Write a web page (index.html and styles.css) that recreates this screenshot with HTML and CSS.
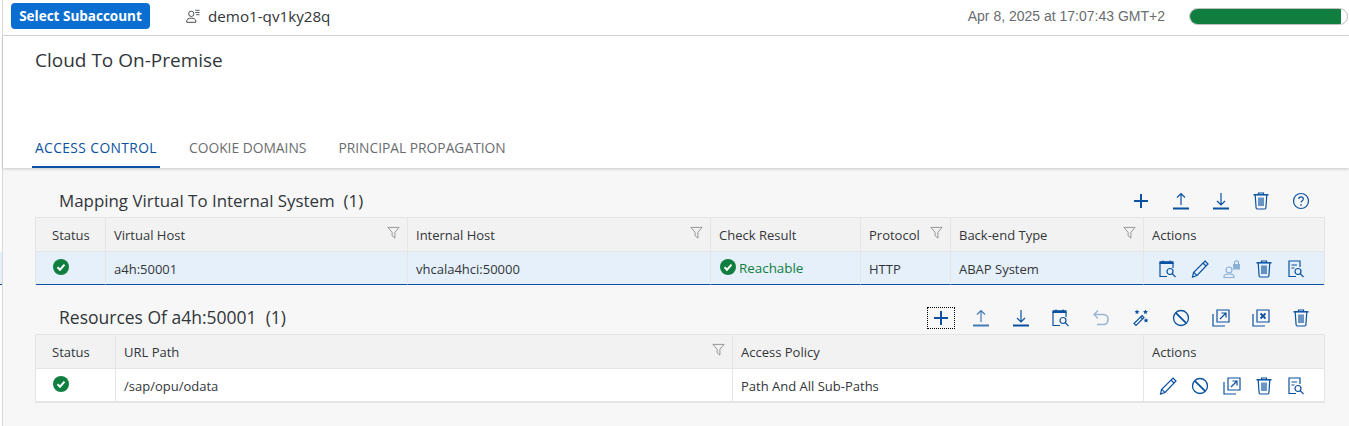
FILE: index.html
```html
<!DOCTYPE html>
<html lang="en">
<head>
    <meta charset="UTF-8">
    <meta name="viewport" content="width=device-width, initial-scale=1.0">
    <title>Cloud To On-Premise</title>
    <link rel="stylesheet" href="styles.css">
</head>
<body>
    <svg class="sprites" aria-hidden="true">
        <symbol id="i-plus" viewBox="0 0 18 18"><path d="M9 2v14M2 9h14" stroke-width="2"/></symbol>
        <symbol id="i-upload" viewBox="0 0 18 18"><path d="M9 13V2M5 5.500 9 1.500l4 4"/><path d="M1 16.500h16" stroke-width="2"/></symbol>
        <symbol id="i-download" viewBox="0 0 18 18"><path d="M9 1v11.500M5 9l4 4 4-4"/><path d="M1 16.500h16" stroke-width="2"/></symbol>
        <symbol id="i-trash" viewBox="0 0 18 18"><path d="M1.500 2.800h15" stroke-width="1.500"/><path d="M6.500 2.500V1h5v1.500M3.200 3l.9 12.800c0 .6.500 1.200 1.100 1.200h7.600c.6 0 1.100-.6 1.100-1.200L14.800 3M7 5.500v8.500M9 5.500v8.500M11 5.500v8.500"/></symbol>
        <symbol id="i-help" viewBox="0 0 18 18"><circle cx="9" cy="9" r="7.500"/><path d="M6.700 7C6.800 5.600 7.800 4.800 9 4.800s2.300.8 2.300 2.100c0 1.800-2.300 1.900-2.300 3.700"/><path d="M9 12.300v1.500" stroke-width="1.400"/></symbol>
        <symbol id="i-cal" viewBox="0 0 18 18"><path d="M1 3v13.500h7M14 3v5"/><path d="M1 1.800h13v1.700H1z" fill="currentColor"/><path d="M4 .5v2M11 .5v2"/><circle cx="11" cy="11.500" r="3"/><path d="m13.200 13.700 3.300 3.300"/></symbol>
        <symbol id="i-doc" viewBox="0 0 18 18"><path d="M13 7V1H2v15.500h7M4.500 5H10M4.500 8h3"/><circle cx="11" cy="11.500" r="3"/><path d="m13.200 13.700 3.300 3.300"/></symbol>
        <symbol id="i-pencil" viewBox="0 0 18 18"><path d="M14 1 17 4 6 15.500l-4.500 1.500 1-4.500zM12 3l3 3M2.800 12.300l3 3"/></symbol>
        <symbol id="i-userlock" viewBox="0 0 18 18"><circle cx="6" cy="10" r="3"/><path d="M1 17.500v-1c0-1.800 1.500-2.500 5-2.500s5 .7 5 2.500v1z"/><rect x="10" y="4" width="7" height="5.500" fill="currentColor" stroke="none"/><path d="M11.500 4V2.800c0-2.500 4-2.500 4 0V4"/></symbol>
        <symbol id="i-undo" viewBox="0 0 18 18"><path d="M6 1.500 2 5.500l4 4"/><path d="M2 5.500h9.500c6 0 6 10 0 10H5" stroke-width="1.600"/></symbol>
        <symbol id="i-wand" viewBox="0 0 18 18"><path d="M10 6.500 12 8.500 4 16.500 2 14.500zM8.500 8l2 2"/><path d="m5 .5.700 1.600 1.700.2-1.300 1.100.4 1.700L5 4.200l-1.500.9.400-1.700L2.600 2.300l1.700-.2zM13.500.5l.7 1.600 1.700.2-1.300 1.100.4 1.700-1.500-.9-1.500.9.400-1.700-1.300-1.100 1.700-.2zM14 9l.7 1.600 1.700.2-1.300 1.100.4 1.700-1.500-.9-1.500.9.400-1.700-1.300-1.100 1.700-.2z" fill="currentColor" stroke="none"/></symbol>
        <symbol id="i-block" viewBox="0 0 18 18"><circle cx="9" cy="9" r="7.500" stroke-width="1.300"/><path d="m3.800 3.800 10.400 10.400" stroke-width="1.800"/></symbol>
        <symbol id="i-open" viewBox="0 0 18 18"><path d="M5 1h12v12H5zM1 5v12h12"/><path d="M8 10l6-6M9.500 4H14v4.500"/></symbol>
        <symbol id="i-close" viewBox="0 0 18 18"><path d="M5 1h12v12H5zM1 5v12h12"/><path d="m8.500 4.500 5 5M13.500 4.500l-5 5" stroke-width="1.800"/></symbol>
        <symbol id="i-filter" viewBox="0 0 14 14"><path d="M1 1.500h12L8.500 6.800V13L5.500 10.500V6.800z"/></symbol>
        <symbol id="i-ok" viewBox="0 0 16 16"><circle cx="8" cy="8" r="8" fill="currentColor" stroke="none"/><path d="M4.500 8.200 7 10.700l4.500-5" stroke="#fff" stroke-width="2"/></symbol>
        <symbol id="i-account" viewBox="0 0 16 16"><circle cx="6" cy="5.500" r="3"/><path d="M.8 15.200v-1.400c0-2.200 2-3.300 5.200-3.300s5.200 1.100 5.200 3.300v1.400z"/><path d="M10.500 1.500h5M10.500 4h5M11.500 6.500h4" stroke-width=".9"/></symbol>
    </svg>

    <div class="rail"><div class="rail-row"></div></div>

    <div class="app">
        <header class="topbar">
            <button class="subaccount-btn">Select Subaccount</button>
            <div class="account">
                <svg class="ico account-ico"><use href="#i-account"/></svg>
                <span>demo1-qv1ky28q</span>
            </div>
            <div class="spacer"></div>
            <span class="timestamp">Apr 8, 2025 at 17:07:43 GMT+2</span>
            <div class="meter"><div class="meter-fill"></div></div>
        </header>

        <section class="page-head">
            <h1>Cloud To On-Premise</h1>
            <nav class="tabs">
                <a class="tab active">ACCESS CONTROL</a>
                <a class="tab">COOKIE DOMAINS</a>
                <a class="tab">PRINCIPAL PROPAGATION</a>
            </nav>
        </section>

        <main class="content">
            <div class="panel-head">
                <h2>Mapping Virtual To Internal System&nbsp; (1)</h2>
                <div class="toolbar">
                    <button class="tool"><svg class="ico"><use href="#i-plus"/></svg></button>
                    <button class="tool"><svg class="ico"><use href="#i-upload"/></svg></button>
                    <button class="tool"><svg class="ico"><use href="#i-download"/></svg></button>
                    <button class="tool"><svg class="ico"><use href="#i-trash"/></svg></button>
                    <button class="tool"><svg class="ico"><use href="#i-help"/></svg></button>
                </div>
            </div>
            <table class="grid mapping">
                <colgroup>
                    <col class="c-70"><col class="c-302"><col class="c-303"><col class="c-150"><col class="c-90"><col class="c-193"><col>
                </colgroup>
                <thead>
                    <tr>
                        <th>Status</th>
                        <th>Virtual Host<svg class="filter"><use href="#i-filter"/></svg></th>
                        <th>Internal Host<svg class="filter"><use href="#i-filter"/></svg></th>
                        <th>Check Result</th>
                        <th>Protocol<svg class="filter"><use href="#i-filter"/></svg></th>
                        <th>Back-end Type<svg class="filter"><use href="#i-filter"/></svg></th>
                        <th>Actions</th>
                    </tr>
                </thead>
                <tbody>
                    <tr class="selected">
                        <td><svg class="status"><use href="#i-ok"/></svg></td>
                        <td>a4h:50001</td>
                        <td>vhcala4hci:50000</td>
                        <td class="reachable"><svg class="status small"><use href="#i-ok"/></svg>Reachable</td>
                        <td>HTTP</td>
                        <td>ABAP System</td>
                        <td>
                            <div class="row-actions">
                                <svg class="ico"><use href="#i-cal"/></svg>
                                <svg class="ico"><use href="#i-pencil"/></svg>
                                <svg class="ico off"><use href="#i-userlock"/></svg>
                                <svg class="ico"><use href="#i-trash"/></svg>
                                <svg class="ico"><use href="#i-doc"/></svg>
                            </div>
                        </td>
                    </tr>
                </tbody>
            </table>

            <div class="panel-head second">
                <h2>Resources Of a4h:50001&nbsp; (1)</h2>
                <div class="toolbar">
                    <button class="tool focus"><svg class="ico"><use href="#i-plus"/></svg></button>
                    <button class="tool"><svg class="ico half"><use href="#i-upload"/></svg></button>
                    <button class="tool"><svg class="ico"><use href="#i-download"/></svg></button>
                    <button class="tool"><svg class="ico"><use href="#i-cal"/></svg></button>
                    <button class="tool"><svg class="ico off"><use href="#i-undo"/></svg></button>
                    <button class="tool"><svg class="ico"><use href="#i-wand"/></svg></button>
                    <button class="tool"><svg class="ico"><use href="#i-block"/></svg></button>
                    <button class="tool"><svg class="ico"><use href="#i-open"/></svg></button>
                    <button class="tool"><svg class="ico"><use href="#i-close"/></svg></button>
                    <button class="tool"><svg class="ico"><use href="#i-trash"/></svg></button>
                </div>
            </div>
            <table class="grid resources">
                <colgroup>
                    <col class="c-80"><col class="c-617"><col class="c-411"><col>
                </colgroup>
                <thead>
                    <tr>
                        <th>Status</th>
                        <th>URL Path<svg class="filter"><use href="#i-filter"/></svg></th>
                        <th>Access Policy</th>
                        <th>Actions</th>
                    </tr>
                </thead>
                <tbody>
                    <tr>
                        <td><svg class="status"><use href="#i-ok"/></svg></td>
                        <td>/sap/opu/odata</td>
                        <td>Path And All Sub-Paths</td>
                        <td>
                            <div class="row-actions">
                                <svg class="ico"><use href="#i-pencil"/></svg>
                                <svg class="ico"><use href="#i-block"/></svg>
                                <svg class="ico"><use href="#i-open"/></svg>
                                <svg class="ico"><use href="#i-trash"/></svg>
                                <svg class="ico"><use href="#i-doc"/></svg>
                            </div>
                        </td>
                    </tr>
                </tbody>
            </table>
        </main>
    </div>
</body>
</html>
```
FILE: styles.css
```css
* {
    box-sizing: border-box;
}
html, body {
    height: 100%;
}
body {
    margin: 0;
    display: flex;
    overflow: hidden;
    font-family: "Open Sans", "Liberation Sans", Arial, sans-serif;
    font-size: 13px;
    color: #32363a;
    background: #fff;
}
.sprites {
    display: none;
}
.rail {
    width: 3px;
    flex: none;
    border-right: 1px solid #d9d9d9;
}
.rail-row {
    height: 33px;
    margin-top: 252px;
    background: #e5f0fa;
    border-bottom: 1px solid #0a51a1;
}
.app {
    flex: 1;
    min-width: 0;
    display: flex;
    flex-direction: column;
}

/* top bar */
.topbar {
    height: 36px;
    flex: none;
    display: flex;
    align-items: flex-start;
    border-bottom: 1px solid #d9d9d9;
    padding: 3px 0 0 8px;
}
.subaccount-btn {
    width: 139px;
    height: 26px;
    border: none;
    border-radius: 4px;
    background: #0a6ed1;
    color: #fff;
    font-family: inherit;
    font-size: 13.5px;
    font-weight: 700;
    padding: 0;
}
.account {
    display: flex;
    align-items: center;
    gap: 8px;
    margin-left: 36px;
    height: 26px;
    font-size: 15.2px;
}
.ico {
    width: 18px;
    height: 18px;
    display: block;
    fill: none;
    stroke: #0a51a1;
    color: #0a51a1;
    stroke-width: 1.2;
    overflow: visible;
}
.account-ico {
    width: 14px;
    height: 14px;
    stroke: #32363a;
    color: #32363a;
    stroke-width: 1;
}
.spacer {
    flex: 1;
}
.timestamp {
    font-family: "Liberation Sans", Arial, sans-serif;
    font-size: 14px;
    line-height: 26px;
    color: #6a6d70;
}
.meter {
    width: 159px;
    height: 17px;
    margin: 5px 1px 0 24px;
    border: 1px solid #bfbfbf;
    border-radius: 9px;
    overflow: hidden;
}
.meter-fill {
    width: 152px;
    height: 17px;
    margin: -1px 0 0 -1px;
    background: #107e3e;
    border-radius: 9px 0 0 9px;
}

/* title + tabs */
.page-head {
    height: 132px;
    flex: none;
    padding: 11px 0 0 32px;
    box-shadow: 0 1px 3px rgba(0, 0, 0, 0.2);
    position: relative;
    display: flex;
    flex-direction: column;
}
h1 {
    margin: 0;
    font-size: 19px;
    font-weight: 400;
    line-height: 26px;
}
.tabs {
    display: flex;
    margin-top: auto;
    margin-left: -3px;
}
.tab {
    height: 35px;
    padding: 0 3px;
    margin-right: 26px;
    line-height: 29px;
    font-size: 13.8px;
    color: #6a6d70;
}
.tab.active {
    width: 128px;
    letter-spacing: 0.4px;
    white-space: nowrap;
    color: #0a51a1;
    border-bottom: 2px solid #0a51a1;
}

/* tables */
.content {
    flex: 1;
    background: #f7f7f7;
    padding: 0 24px 0 32px;
}
.panel-head {
    height: 49px;
    display: flex;
    align-items: flex-end;
    justify-content: space-between;
    padding: 0 4px 4px 24px;
}
.panel-head.second {
    padding-bottom: 5px;
}
.second .toolbar {
    padding-bottom: 0;
}
h2 {
    margin: 0;
    font-size: 16.9px;
    font-weight: 400;
    line-height: 24px;
}
.second h2 {
    font-size: 17.5px;
}
.toolbar {
    display: flex;
    align-items: center;
    padding-bottom: 1px;
}
.tool {
    width: 40px;
    height: 22px;
    display: flex;
    align-items: center;
    justify-content: center;
    background: none;
    border: none;
    padding: 0;
}
.tool.focus {
    width: 26px;
    height: 20px;
    margin: 0 7px;
    outline: 1px dotted #000;
}
.off {
    opacity: 0.4;
}
.half {
    opacity: 0.75;
}
.grid {
    width: 1290px;
    table-layout: fixed;
    border-collapse: separate;
    border-spacing: 0;
    background: #fff;
    border: 1px solid #e5e5e5;
    border-bottom-width: 2px;
}
.grid.mapping {
    border-bottom: none;
}
.c-70 { width: 70px; }
.c-80 { width: 80px; }
.c-90 { width: 90px; }
.c-150 { width: 150px; }
.c-193 { width: 193px; }
.c-302 { width: 302px; }
.c-303 { width: 303px; }
.c-411 { width: 411px; }
.c-617 { width: 617px; }
th, td {
    height: 33px;
    padding: 2px 8px 0;
    border-right: 1px solid #e5e5e5;
    font-size: 13px;
    font-weight: 400;
    text-align: left;
    white-space: nowrap;
    position: relative;
}
.resources td {
    height: 32px;
    padding-top: 1px;
}
th {
    height: 34px;
    padding: 0 8px;
    background: #f2f2f2;
    border-bottom: 1px solid #e5e5e5;
}
th:first-child {
    padding-left: 16px;
}
th:last-child, td:last-child {
    border-right: none;
}
.filter {
    position: absolute;
    top: 8px;
    right: 7px;
    width: 13px;
    height: 13px;
    fill: none;
    stroke: #8c8f92;
    stroke-width: 1;
}
.status {
    display: block;
    width: 16px;
    height: 16px;
    margin: 0 0 4px 9px;
    color: #107e3e;
    fill: none;
    stroke-width: 2;
}
.status.small {
    display: inline-block;
    margin: 0 3px 5px 1px;
    vertical-align: middle;
}
.selected td {
    background: #e5f0fa;
    border-bottom: 1px solid #0a51a1;
}
.reachable {
    color: #107e3e;
    font-size: 13.4px;
}
.row-actions {
    display: flex;
    justify-content: space-between;
    margin: 0 11px 0 7px;
}
```
